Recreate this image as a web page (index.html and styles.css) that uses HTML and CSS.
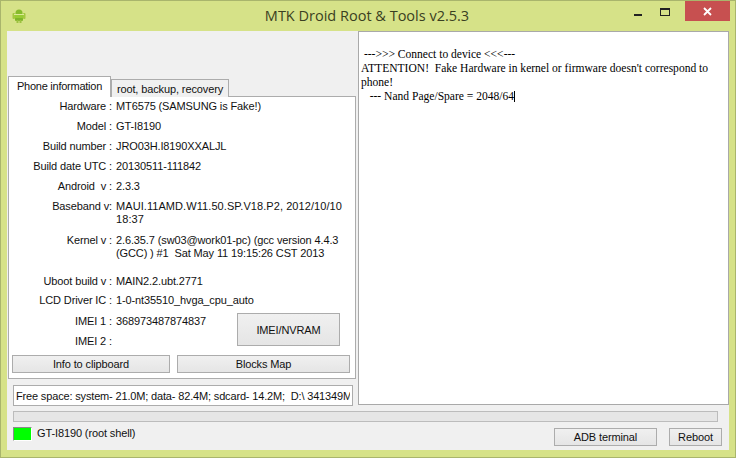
FILE: index.html
```html
<!DOCTYPE html>
<html lang="en">
<head>
<meta charset="utf-8">
<title>MTK Droid Root &amp; Tools v2.5.3</title>
<link rel="stylesheet" href="styles.css">
</head>
<body>
<div class="window">
  <header class="titlebar">
    <svg class="app-icon" width="16" height="18" viewBox="0 0 16 18">
      <rect x="1.500" y="6" width="2.500" height="6" rx="1" fill="#a3c83f"/>
      <rect x="12" y="6" width="2.500" height="6" rx="1" fill="#a3c83f"/>
      <path d="M4.500 6a3.500 3.500 0 0 1 7 0v1h-7z" fill="#86bb2c"/>
      <rect x="4" y="8" width="8" height="4" fill="#98cb33"/>
      <rect x="4" y="11" width="8" height="3" rx="1" fill="#7fb52a"/>
      <rect x="5.500" y="13" width="2" height="3" fill="#9cc23f"/>
      <rect x="8.500" y="13" width="2" height="3" fill="#9cc23f"/>
      <rect x="3" y="7" width="10" height="1" fill="#dcea9a"/>
    </svg>
    <div class="title">MTK Droid Root &amp; Tools v2.5.3</div>
    <div class="controls">
      <div class="ctl"><span class="min"></span></div>
      <div class="ctl"><span class="max"></span></div>
      <div class="close">
        <svg width="9" height="9" viewBox="0 0 9 9"><path d="M1 1l7 7M8 1l-7 7" stroke="#fff" stroke-width="1.800"/></svg>
      </div>
    </div>
  </header>
  <div class="client">
    <div class="top">
      <section class="left">
        <div class="tabs">
          <div class="tab active">Phone information</div>
          <div class="tab">root, backup, recovery</div>
        </div>
        <div class="panel">
          <div class="row r20"><span class="k">Hardware :</span><span class="v">MT6575 (SAMSUNG is Fake!)</span></div>
          <div class="row r20"><span class="k">Model :</span><span class="v">GT-I8190</span></div>
          <div class="row r20"><span class="k">Build number :</span><span class="v">JRO03H.I8190XXALJL</span></div>
          <div class="row r20"><span class="k">Build date UTC :</span><span class="v">20130511-111842</span></div>
          <div class="row r20"><span class="k">Android&nbsp; v :</span><span class="v">2.3.3</span></div>
          <div class="row r35"><span class="k">Baseband v:</span><span class="v wide">MAUI.11AMD.W11.50.SP.V18.P2, 2012/10/10<br>18:37</span></div>
          <div class="row r40"><span class="k">Kernel v :</span><span class="v">2.6.35.7 (sw03@work01-pc) (gcc version 4.4.3<br>(GCC) ) #1&nbsp; Sat May 11 19:15:26 CST 2013</span></div>
          <div class="row r19"><span class="k">Uboot build v :</span><span class="v">MAIN2.2.ubt.2771</span></div>
          <div class="row r21"><span class="k">LCD Driver IC :</span><span class="v">1-0-nt35510_hvga_cpu_auto</span></div>
          <div class="imei">
            <div class="imei-rows">
              <div class="row r20"><span class="k">IMEI 1 :</span><span class="v">368973487874837</span></div>
              <div class="row r20"><span class="k">IMEI 2 :</span><span class="v"></span></div>
            </div>
            <button class="btn imei-btn">IMEI/NVRAM</button>
          </div>
          <div class="panel-actions">
            <button class="btn clip">Info to clipboard</button>
            <button class="btn blocks">Blocks Map</button>
          </div>
        </div>
        <div class="free"><span>Free space: system- 21.0M; data- 82.4M; sdcard- 14.2M;&nbsp; D:\ 341349M</span></div>
      </section>
      <section class="log">
        <div>&nbsp;---&gt;&gt;&gt; Connect to device &lt;&lt;&lt;---</div>
        <div>ATTENTION!&nbsp; Fake Hardware in kernel or firmware doesn't correspond to phone!</div>
        <div>&nbsp;&nbsp; --- Nand Page/Spare = 2048/64<span class="caret"></span></div>
      </section>
    </div>
    <div class="progress"></div>
    <footer class="status">
      <span class="led"></span>
      <span class="device">GT-I8190 (root shell)</span>
      <button class="btn adb">ADB terminal</button>
      <button class="btn reboot">Reboot</button>
    </footer>
  </div>
</div>
</body>
</html>
```
FILE: styles.css
```css
* { box-sizing: border-box; }
html, body { margin: 0; padding: 0; }
body { width: 736px; height: 458px; overflow: hidden; font-family: "Liberation Sans", Arial, sans-serif; font-size: 11px; letter-spacing: -0.12px; color: #111; }
.window { width: 736px; height: 458px; background: #d6e288; border: 1px solid #a9b56c; display: flex; flex-direction: column; padding: 0 6px 7px; }
.titlebar { height: 30px; flex: none; display: flex; align-items: flex-start; position: relative; }
.app-icon { position: absolute; left: 4px; top: 6px; }
.title { flex: 1; text-align: center; font-family: "Open Sans", sans-serif; font-size: 14.500px; letter-spacing: 0; line-height: 30px; color: #3a3f22; padding-right: 2px; }
.controls { position: absolute; right: -1px; top: 0; display: flex; }
.ctl { width: 28px; height: 20px; position: relative; }
.min { position: absolute; left: 5px; top: 13px; width: 8px; height: 2px; background: #222; }
.max { position: absolute; left: 3px; top: 7px; width: 10px; height: 8px; border: 1px solid #222; border-top-width: 2px; }
.close { width: 45px; height: 20px; background: #c75050; display: flex; align-items: center; justify-content: center; }
.client { flex: 1; background: #f0f0f0; display: flex; flex-direction: column; min-height: 0; }
.top { display: flex; height: 374px; flex: none; }
.left { width: 351px; flex: none; padding: 45px 0 0 1px; }
.tabs { display: flex; align-items: flex-end; height: 21px; position: relative; z-index: 1; }
.tab { border: 1px solid #acacac; border-bottom: 0; background: #f0f0f0; height: 18px; line-height: 19px; width: 118px; text-align: center; white-space: nowrap; }
.tab.active { background: #fff; height: 21px; width: 103px; line-height: 18px; letter-spacing: -0.25px; }
.panel { width: 348px; height: 283px; margin-top: -1px; background: #fff; border: 1px solid #acacac; display: flex; flex-direction: column; }
.row { display: flex; line-height: 13px; }
.r19 { height: 19px; padding-top: 3px; }
.r20 { height: 20px; padding-top: 3px; }
.r21 { height: 21px; padding-top: 3px; }
.r35 { height: 35px; padding-top: 3px; }
.r40 { height: 40px; padding-top: 2px; }
.k { width: 103px; flex: none; text-align: right; white-space: nowrap; margin-right: 4px; }
.v { flex: 1; white-space: nowrap; }
.wide { letter-spacing: 0.07px; }
.imei { display: flex; height: 42px; position: relative; }
.imei-rows { width: 228px; flex: none; }
.btn { font: inherit; letter-spacing: inherit; color: #111; background: linear-gradient(#f0f0f0, #e5e5e5); border: 1px solid #acacac; padding: 0; margin: 0; }
.imei-btn { width: 103px; height: 33px; margin-top: 1px; }
.panel-actions { display: flex; margin-top: 1px; padding-left: 3px; gap: 7px; }
.clip { width: 158px; height: 18px; }
.blocks { width: 173px; height: 18px; }
.free { width: 340px; height: 21px; margin: 6px 0 0 5px; background: #fff; border: 1px solid #acacac; padding: 0 2px; line-height: 20px; overflow: hidden; white-space: nowrap; letter-spacing: -0.16px; }
.free span { display: block; overflow: hidden; }
.log { flex: 1; background: #fff; border: 1px solid #a9a9a9; font-family: "Liberation Serif", "Times New Roman", serif; font-size: 11.550px; letter-spacing: 0; line-height: 14px; padding: 15px 8px 0 2px; color: #000; }
.caret { display: inline-block; width: 1px; height: 11px; background: #000; vertical-align: -2px; }
.progress { height: 11px; width: 705px; flex: none; margin: 6px 0 0 6px; background: #e6e6e6; border: 1px solid #bcbcbc; }
.status { display: flex; align-items: flex-start; flex: 1; padding: 5px 7px 0 6px; }
.led { width: 19px; height: 14px; background: #00ff00; border: 1px solid #8a8a8a; border-right-color: #fff; border-bottom-color: #fff; flex: none; }
.device { margin-left: 5px; line-height: 13px; flex: 1; }
.adb { width: 103px; height: 18px; margin-right: 12px; margin-top: 1px; }
.reboot { width: 53px; height: 18px; margin-top: 1px; }
```
